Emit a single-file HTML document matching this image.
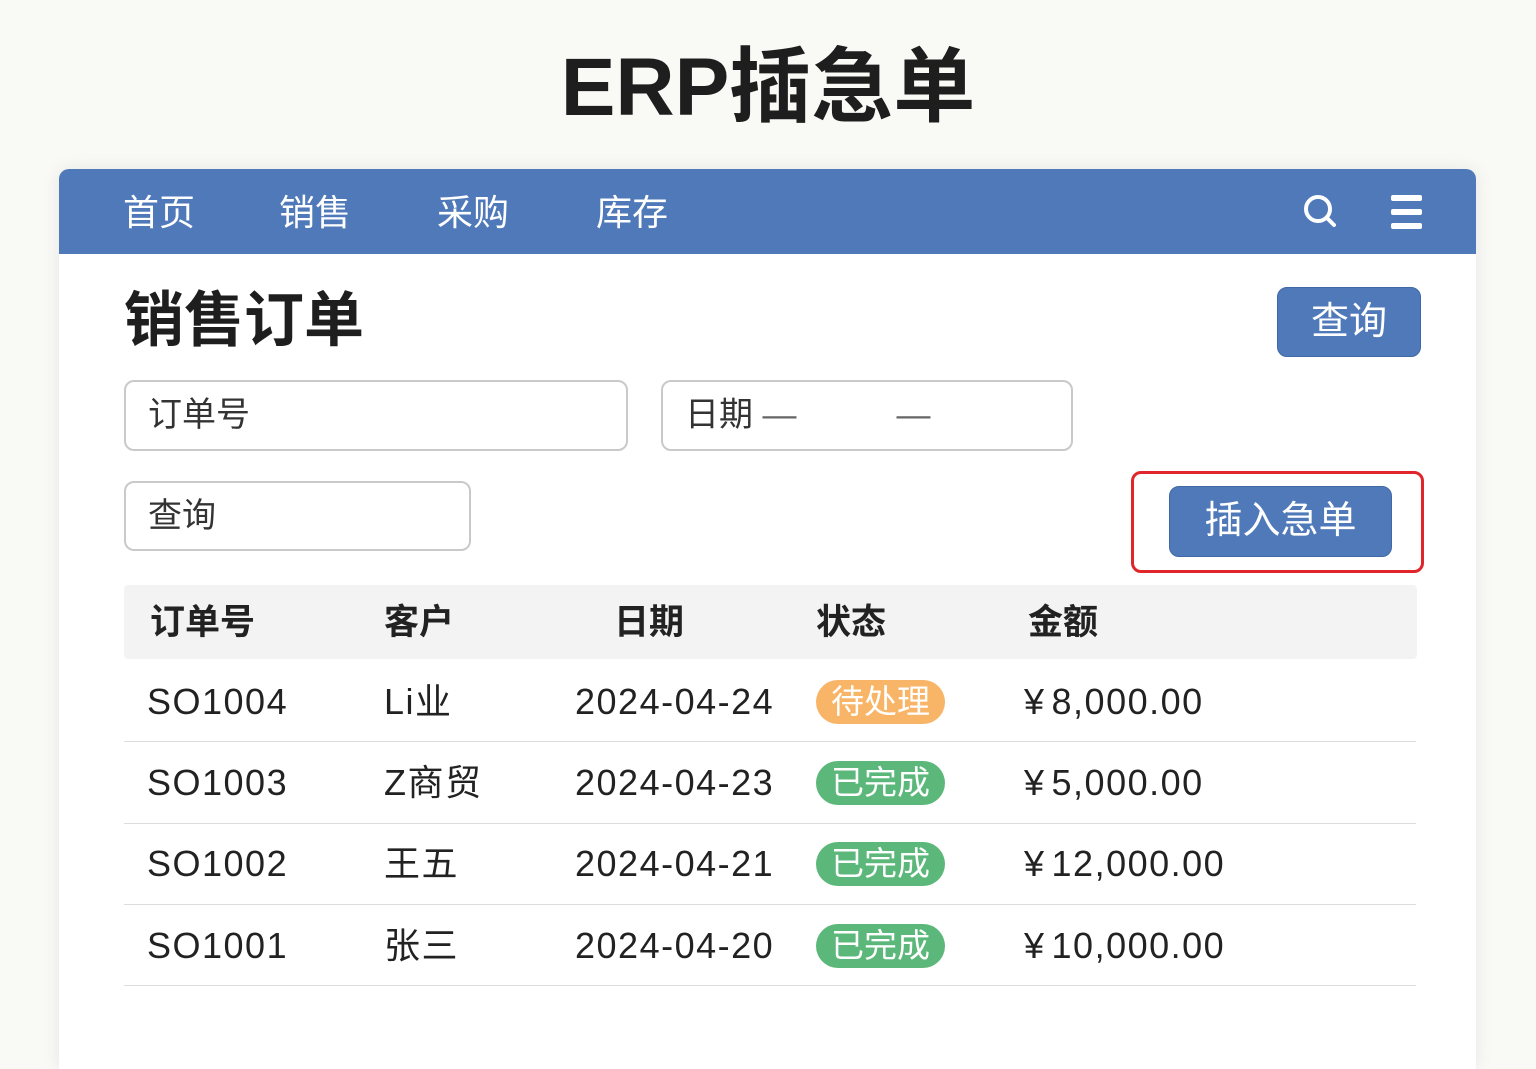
<!DOCTYPE html>
<html><head><meta charset="utf-8"><style>
*{margin:0;padding:0;box-sizing:border-box}
body{width:1536px;height:1024px;background:#f9f9f6;font-family:"Liberation Sans","Noto Sans CJK SC",sans-serif;position:relative;overflow:hidden;color:#222}
.a{position:absolute}
.title{left:0;width:1536px;top:38px;text-align:center;font-size:82px;font-weight:bold;color:#1e1e1e;line-height:100px}
.card{left:59px;top:169px;width:1417px;height:900px;background:#fff;border-radius:10px 10px 0 0;box-shadow:0 0 18px rgba(0,0,0,.08);overflow:hidden}
.nav{left:0;top:0;width:1417px;height:85px;background:#4f79b9}
.nav span{position:absolute;top:22px;font-size:36px;color:#fff;line-height:44px}
.h{font-size:60px;font-weight:bold;line-height:70px;color:#1e1e1e}
.btn{background:#4f79b9;color:#fff;border-radius:10px;text-align:center;border:1px solid #3f68a6}
.inp{border:2px solid #c9c9c9;border-radius:10px;font-size:34px;color:#333;padding-left:22px}
.th{left:65px;top:416px;width:1293px;height:74px;background:#f3f3f3;border-radius:4px}
.c{position:absolute;font-size:36px;line-height:44px}
.n{letter-spacing:1.5px}
.hd{font-weight:bold;font-size:35px}
.line{position:absolute;left:65px;width:1292px;height:1px;background:#ddd}
.bd{position:absolute;left:757px;width:129px;height:44px;border-radius:22px;color:#fff;font-size:33px;text-align:center;line-height:44px}
.y{margin-right:6px}
</style></head><body>
<div class="a title">ERP插急单</div>
<div class="a card">
 <div class="a nav">
  <span style="left:64px">首页</span><span style="left:220px">销售</span><span style="left:378px">采购</span><span style="left:537px">库存</span>
  <svg class="a" style="left:1243px;top:24px" width="36" height="36" viewBox="0 0 36 36"><circle cx="16" cy="16" r="12" fill="none" stroke="#fff" stroke-width="4"/><path d="M25 25l7 7" stroke="#fff" stroke-width="4" stroke-linecap="round"/></svg>
  <svg class="a" style="left:1332px;top:26px" width="32" height="36" viewBox="0 0 32 36"><rect x="0" y="0" width="31" height="6" rx="2" fill="#fff"/><rect x="0" y="14" width="31" height="6" rx="2" fill="#fff"/><rect x="0" y="28" width="31" height="6" rx="2" fill="#fff"/></svg>
 </div>
 <div class="a h" style="left:65px;top:117px">销售订单</div>
 <div class="a btn" style="left:1218px;top:118px;width:144px;height:70px;font-size:38px;line-height:68px">查询</div>
 <div class="a inp" style="left:65px;top:211px;width:504px;height:71px;line-height:67px">订单号</div>
 <div class="a inp" style="left:602px;top:211px;width:412px;height:71px;line-height:67px">日期 <span style="color:#666">—</span><span style="color:#666;margin-left:100px">—</span></div>
 <div class="a inp" style="left:65px;top:312px;width:347px;height:70px;line-height:66px">查询</div>
 <div class="a" style="left:1072px;top:302px;width:293px;height:102px;border:3px solid #e0262a;border-radius:10px"></div>
 <div class="a btn" style="left:1110px;top:317px;width:223px;height:71px;font-size:38px;line-height:69px">插入急单</div>
 <div class="a th"></div>
 <div class="c hd" style="left:91px;top:432px">订单号</div>
 <div class="c hd" style="left:325px;top:432px">客户</div>
 <div class="c hd" style="left:555px;top:432px">日期</div>
 <div class="c hd" style="left:757px;top:432px">状态</div>
 <div class="c hd" style="left:969px;top:432px">金额</div>

 <div class="c n" style="left:88px;top:511px">SO1004</div><div class="c n" style="left:325px;top:511px">Li业</div><div class="c n" style="left:516px;top:511px">2024-04-24</div><div class="bd" style="top:511px;background:#f9b567">待处理</div><div class="c n" style="left:965px;top:511px"><span class="y">¥</span>8,000.00</div>
 <div class="line" style="top:572px"></div>
 <div class="c n" style="left:88px;top:592px">SO1003</div><div class="c n" style="left:325px;top:592px">Z商贸</div><div class="c n" style="left:516px;top:592px">2024-04-23</div><div class="bd" style="top:592px;background:#5cb87a">已完成</div><div class="c n" style="left:965px;top:592px"><span class="y">¥</span>5,000.00</div>
 <div class="line" style="top:654px"></div>
 <div class="c n" style="left:88px;top:673px">SO1002</div><div class="c n" style="left:325px;top:673px">王五</div><div class="c n" style="left:516px;top:673px">2024-04-21</div><div class="bd" style="top:673px;background:#5cb87a">已完成</div><div class="c n" style="left:965px;top:673px"><span class="y">¥</span>12,000.00</div>
 <div class="line" style="top:735px"></div>
 <div class="c n" style="left:88px;top:755px">SO1001</div><div class="c n" style="left:325px;top:755px">张三</div><div class="c n" style="left:516px;top:755px">2024-04-20</div><div class="bd" style="top:755px;background:#5cb87a">已完成</div><div class="c n" style="left:965px;top:755px"><span class="y">¥</span>10,000.00</div>
 <div class="line" style="top:816px"></div>
</div>
</body></html>
